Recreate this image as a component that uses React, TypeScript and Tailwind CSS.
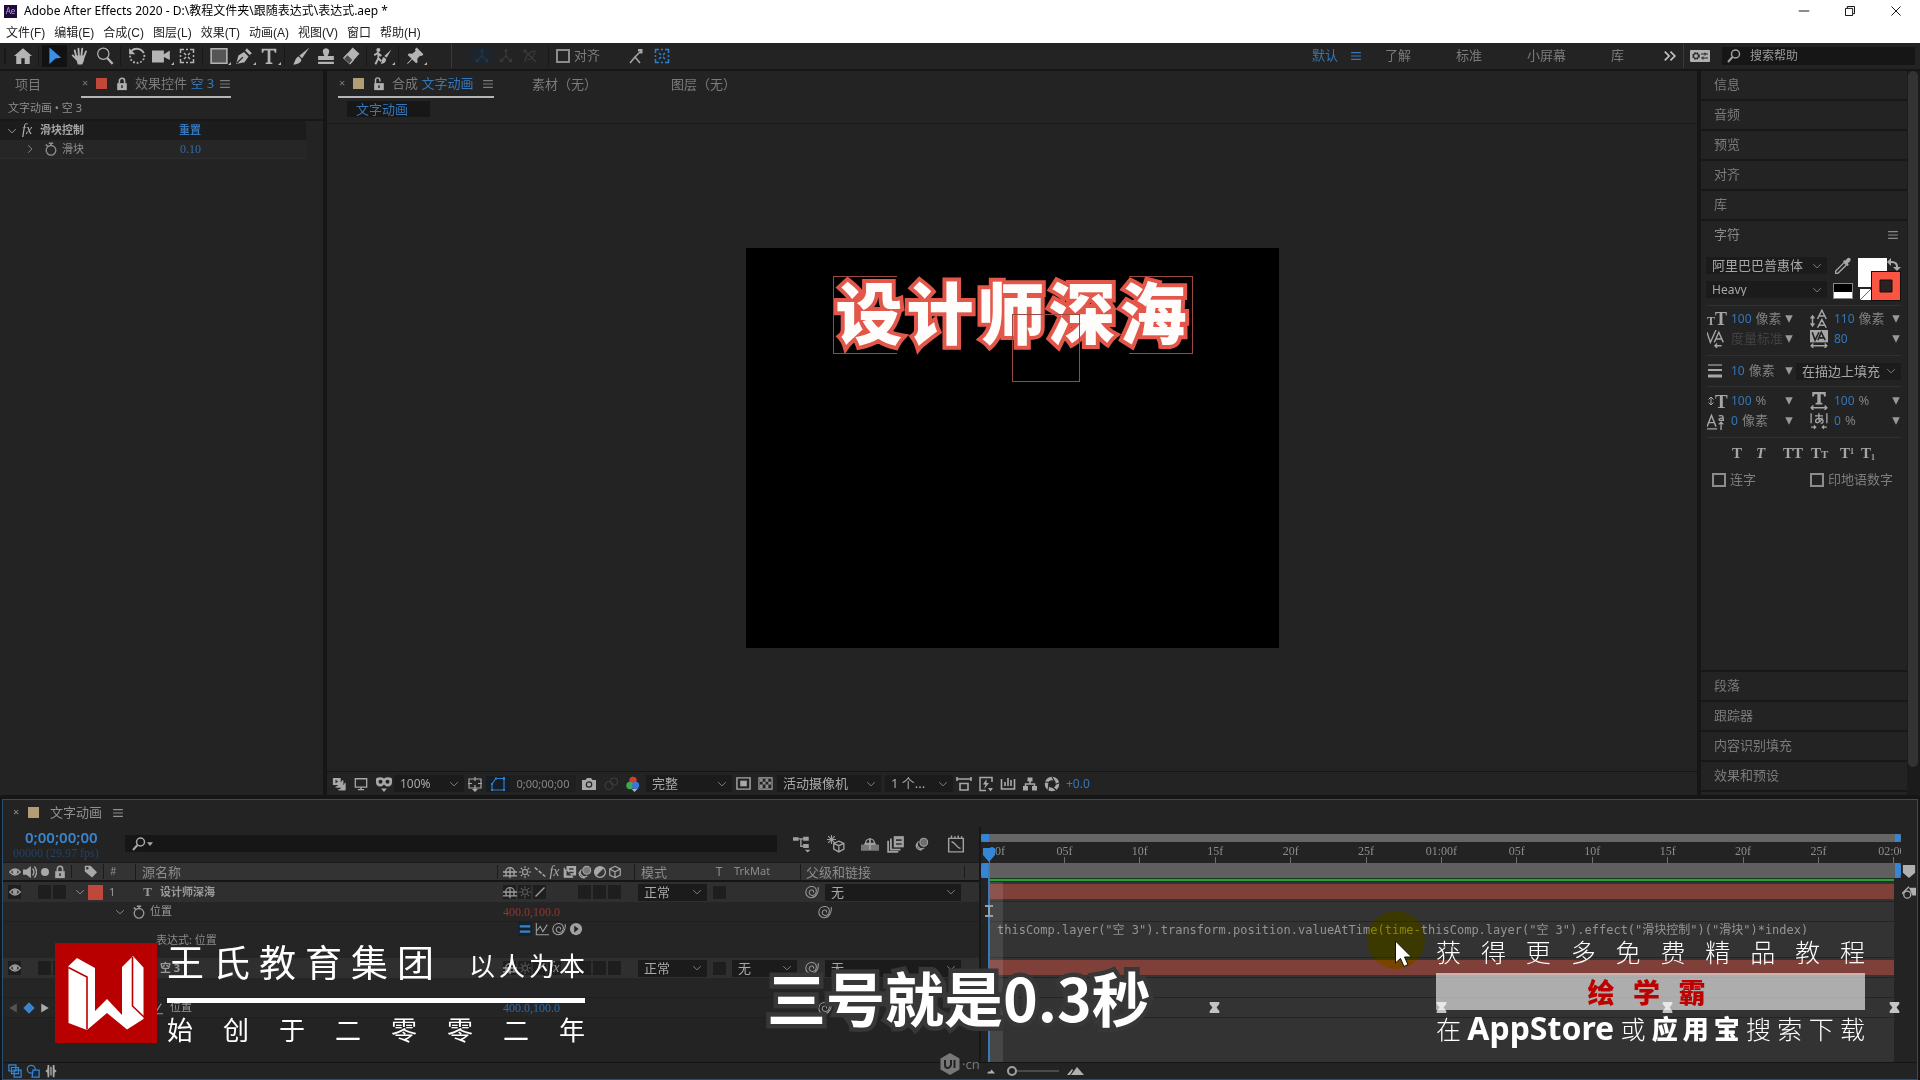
import React from "react";

const CJK = "font-['Noto_Sans','Noto_Sans_CJK_SC',sans-serif]";
const DIGITS = "font-['Liberation_Serif','Noto_Sans_CJK_SC',serif] text-[12px]";

type IcProps = { children: React.ReactNode; className?: string };
const Ic = ({ children, className = "size-4" }: IcProps) => (
  <svg viewBox="0 0 16 16" className={`shrink-0 ${className}`} fill="none" stroke="currentColor" strokeWidth="1.2" aria-hidden="true">
    {children}
  </svg>
);
const F = { fill: "currentColor", stroke: "none" };

const Chevron = () => <Ic className="size-3"><path d="M3 5.500l5 5 5-5" /></Ic>;
const MenuLines = () => <Ic className="size-3"><path d="M1.500 3.500h13M1.500 8h13M1.500 12.500h13" strokeWidth="1.600" /></Ic>;
const Eye = () => <Ic className="size-3"><path d="M1 8q7-8 14 0q-7 8-14 0z" strokeWidth="1.800" /><circle cx="8" cy="8" r="3.200" {...F} /></Ic>;
const Lock = () => <Ic className="size-3.5"><path d="M2.500 7h11v8h-11z" {...F} /><path d="M5 7V4.500a3 3 0 0 1 6 0V7" strokeWidth="1.800" /><path d="M8 9.500v3" stroke="#222" strokeWidth="1.600" /></Ic>;
const Unlock = () => <Ic className="size-3.5"><path d="M2.500 7h11v8h-11z" {...F} /><path d="M4 7V3.500a2.500 2.500 0 0 1 5 0V5" strokeWidth="1.700" /><path d="M8 9.500v3" stroke="#222" strokeWidth="1.600" /></Ic>;
const Search = () => <Ic className="size-4"><circle cx="9.500" cy="6" r="4" strokeWidth="1.500" /><path d="M6.500 9L2 14" strokeWidth="2" /></Ic>;
const Stopwatch = () => <Ic className="size-3.5"><circle cx="8" cy="9.500" r="5.500" strokeWidth="1.500" /><path d="M5.500 1.500h5M8 1.500V4M2 3l2.500 2" strokeWidth="1.700" /></Ic>;
const Spiral = () => <Ic className="size-3.5"><path d="M15 2.500c1 6-2.500 12-8 12C3.500 14.500.5 11.500 1 7.500 1.500 3.500 5 1.500 8.500 1.800c3.500.4 5 3.200 4.300 6.200-.7 3-3 4.200-5.300 3.800-2.200-.4-3-2.300-2.500-4 .5-1.600 2-2.400 3.400-2 1.200.3 1.700 1.500 1.200 2.700" strokeWidth="1.200" /></Ic>;
const Shy = () => <Ic className="size-3.5"><path d="M3 8a5 5 0 0 1 10 0zM0 8h16M0 12.500h16M8 4v11M3.500 8v4M12.500 8v4" strokeWidth="1.500" /></Ic>;
const Sun = () => <Ic className="size-3.5"><circle cx="8" cy="8" r="2.800" /><path d="M8 1v3M8 12v3M1 8h3M12 8h3M3.200 3.200l2 2M10.800 10.800l2 2M12.800 3.200l-2 2M5.200 10.800l-2 2" /></Ic>;
const Fx = () => <span className="font-['Liberation_Serif',serif] text-[14px] leading-none italic">fx</span>;
const Film = () => <Ic className="size-3.5"><path d="M1 3v11h11M4 1h11v11H4z" {...F} /><path d="M1.500 3v11h10" /><path d="M7 4.500h5M7 8.500h5" stroke="#333" strokeWidth="1.600" /></Ic>;
const Blur = () => <Ic className="size-3.5"><circle cx="10" cy="6" r="4.500" fill="currentColor" fillOpacity=".6" /><path d="M4 5a5 5 0 0 0 6.500 7.500M2 7.500A5 5 0 0 0 8 14.500" strokeWidth="1.400" /></Ic>;
const Half = () => <Ic className="size-3.5"><circle cx="8" cy="8" r="6.200" strokeWidth="1.500" /><path d="M12.500 3.500a6.300 6.300 0 0 0-9 9z" {...F} /></Ic>;
const Cube = () => <Ic className="size-3.5"><path d="M8 1.500l6 3v7l-6 3-6-3v-7zM2 4.500l6 3.200 6-3.200M8 7.700v6.800" strokeWidth="1.400" /></Ic>;
const GraphIcon = () => <Ic className="size-3.5"><path d="M1.500 1v13.500H16M2 10l4-5 3 6 5-8" /></Ic>;
const Axis = () => <Ic className="size-4"><path d="M8 8V2M8 8l-5 5M8 8l5 5M6.500 3.500L8 1.500l1.500 2M2.500 10.500v3h3M13.500 10.500v3h-3" /></Ic>;
const PanBox = () => <Ic className="size-4"><path d="M1.500 5V1.500H5M11 1.500h3.500V5M14.500 11v3.500H11M5 14.500H1.500V11M7 1.500h2M7 14.500h2M1.500 7v2M14.500 7v2M5 5l2 2M11 5L9 7M5 11l2-2M11 11L9 9" strokeWidth="1.500" /></Ic>;

function Tool({ label, children, active, more }: { label: string; children: React.ReactNode; active?: boolean; more?: boolean }) {
  return (
    <button aria-label={label} className={`relative flex h-[22px] w-[25px] items-center justify-center ${active ? "bg-[#121212] text-[#3b8fe6]" : "text-[#b4b4b4]"}`}>
      {children}
      {more && <svg viewBox="0 0 4 4" className="absolute right-0 bottom-0.5 size-[3px]"><path d="M4 0v4H0z" fill="currentColor" /></svg>}
    </button>
  );
}
const Sep = () => <span className="flex w-[7px] justify-center"><i className="h-5 w-px bg-[#181818]" /></span>;

function Sel({ label, value, className }: { label: string; value: string; className: string }) {
  return (
    <span className={`relative flex h-[17px] items-center bg-[#1b1b1b] text-[#a8a8a8] ${className}`}>
      <select aria-label={label} className="h-full w-full appearance-none truncate bg-transparent pr-4 pl-1.5 leading-none outline-none">
        <option>{value}</option>
      </select>
      <span className="pointer-events-none absolute right-1 text-[#8a8a8a]"><Chevron /></span>
    </span>
  );
}

function Check({ label }: { label: string }) {
  return (
    <label className="flex items-center gap-1 text-[13px] text-[#7d7d7d]">
      <input type="checkbox" className="size-3.5 appearance-none border-2 border-[#8c8c8c]" />
      {label}
    </label>
  );
}

function TopBar() {
  return (
    <header>
      <div className="flex h-[22px] items-center bg-white pl-1 text-[12px] text-black">
        <span className="flex size-[13px] items-center justify-center bg-[#1f0a3c] text-[8px] text-[#b9a0f0]">Ae</span>
        <h1 className="ml-[7px]">Adobe After Effects 2020 - D:\教程文件夹\跟随表达式\表达式.aep *</h1>
        <div className="mr-[18px] ml-auto flex gap-[34px]">
          <button aria-label="最小化"><Ic className="size-3"><path d="M1 8h14" /></Ic></button>
          <button aria-label="还原"><Ic className="size-3"><path d="M2 4.500h9.500V14H2zM4.500 4.500V2H14v9.500h-2.500" /></Ic></button>
          <button aria-label="关闭"><Ic className="size-3"><path d="M2 2l12 12M14 2L2 14" /></Ic></button>
        </div>
      </div>
      <nav className="flex h-[21px] items-center gap-[9px] bg-white pl-1.5 font-['Liberation_Sans','Noto_Sans_CJK_SC',sans-serif] text-[12px] text-[#222]">
        {["文件(F)", "编辑(E)", "合成(C)", "图层(L)", "效果(T)", "动画(A)", "视图(V)", "窗口", "帮助(H)"].map((m) => <button key={m}>{m}</button>)}
      </nav>
      <div className="flex h-7 items-center border-b-2 border-[#161616] bg-[#232323] text-[13px] text-[#7b7b7b]">
        <span className="ml-1 h-4 w-0.5 bg-[#191919]" />
        <span className="w-1" />
        <Tool label="主页"><Ic className="size-[18px]"><path d="M8 1l8 7h-2v7H9.500v-5h-3v5H2V8H0z" {...F} /></Ic></Tool>
        <Sep />
        <Tool label="选取" active><Ic className="size-[18px]"><path d="M3 0.500l10.500 9-5 .7L3 15z" {...F} /></Ic></Tool>
        <Tool label="手形"><Ic className="size-[18px]"><path d="M4.600 8.500L3.300 3M7 7.500L6.600 1.500M9.300 7.500l.7-6M11.500 8.500l1.800-4.500M5 11L1.500 7.500" strokeWidth="1.700" strokeLinecap="round" /><path d="M3.800 7.500h8.500l-.8 4.500-1.500 3.500H6z" {...F} /></Ic></Tool>
        <Tool label="缩放"><Ic className="size-[18px]"><circle cx="6.500" cy="6" r="5" strokeWidth="1.100" /><path d="M10 9.800l4.800 5.200" strokeWidth="2" /></Ic></Tool>
        <Sep />
        <Tool label="旋转"><Ic className="size-[18px]"><path d="M3 3.500C6 .5 12 1 14 5.500" strokeWidth="1.700" /><path d="M14.500 7c.5 5-4 8-8 7-3-.7-5-3.500-4.500-6.500" strokeWidth="1.600" strokeDasharray="1.600 1.600" /><path d="M1 1v5.500h5.500z" {...F} /></Ic></Tool>
        <Tool label="摄像机" more><Ic className="size-[19px]"><path d="M0 3h10v3l5-3v8l-5-2.500V13H0z" {...F} /></Ic></Tool>
        <Tool label="锚点"><PanBox /></Tool>
        <Sep />
        <Tool label="矩形" more><Ic className="size-[18px]"><path d="M1 1.500h14v13H1z" fill="#555" strokeWidth="1.400" /></Ic></Tool>
        <Tool label="钢笔" more><Ic className="size-[18px]"><path d="M1 15L3 7.500l5-3 4 4-3.500 5zM9 3l1.500-2L15 5.500 13 7z" {...F} /><path d="M1.500 14.500L7 9" stroke="#232323" /></Ic></Tool>
        <Tool label="文字" more><Ic className="size-[18px]"><path d="M1.500 1.500h13V5h-1.300L12.500 3H9.200v10.500l1.800.5v1H5v-1l1.800-.5V3H3.500L2.800 5H1.500z" {...F} /></Ic></Tool>
        <Sep />
        <Tool label="画笔"><Ic className="size-[18px]"><path d="M15.500.5L9 10 6.500 7.700zM6 8.500L8.300 11c0 3-3.500 4.500-7.300 4.500C3 13.500 2.500 9.500 6 8.500z" {...F} /></Ic></Tool>
        <Tool label="仿制图章"><Ic className="size-[18px]"><path d="M8 1a3 3 0 0 1 2.500 4.500L9.500 8H15v3.500H1V8h5.500l-1-2.500A3 3 0 0 1 8 1zM1 13h14v2H1z" {...F} /></Ic></Tool>
        <Tool label="橡皮擦"><Ic className="size-[18px]"><path d="M9.500.5L15.500 6 7 15.500 1 10z" {...F} /><path d="M1.500 10L5 6.500l5 5L7 15" fill="#4a4a4a" /></Ic></Tool>
        <Sep />
        <Tool label="Roto 笔刷" more><Ic className="size-[19px]"><circle cx="4.500" cy="2.500" r="1.700" {...F} /><path d="M1 7l3-2 3 2.500M4.500 5v4.500L2 14.500M4.500 9.500L7 12" strokeWidth="1.600" /><path d="M15.500 2L11.500 9 9.500 7.500zM9 8.500l2 1.500c0 3-2 4-4.500 4C8 12.500 7 10 9 8.500z" {...F} /></Ic></Tool>
        <Sep />
        <Tool label="人偶控点" more><Ic className="size-[18px]"><path d="M9.500 0.500L15.500 6.500 14 8l-1.500-.3L10 10.500l.3 3L9 14.500 5.500 11 1.500 15l-.5-.5 4-4L1.500 7l1-1.300 3 .3L8.500 3.500 8 2z" {...F} /></Ic></Tool>
        <span className="ml-6 h-6 w-px bg-[#3a3a3a]" />
        <div className="ml-[18px] flex text-[#3a3a3a]">
          <span className="flex w-6 justify-center bg-[#1e242b] text-[#1d3750]"><Axis /></span>
          <span className="flex w-6 justify-center"><Axis /></span>
          <span className="flex w-6 justify-center"><Ic><path d="M2 2l12 12M3 14c0-6 5-11 10-11-1 5-4 9-8 9M2 5V2h3" /></Ic></span>
        </div>
        <span className="mr-[7px] ml-1.5 h-5 w-px bg-[#191919]" />
        <Check label="对齐" />
        <div className="ml-7 flex items-center gap-2.5 text-[#a6a6a6]">
          <Ic><path d="M2 15l5-6 5 6M7 9l5-5" strokeWidth="1.500" /><path d="M10 1h4.500v4.500H12V3.500h-2z" {...F} /></Ic>
          <span className="text-[#2f7fc8]"><PanBox /></span>
        </div>
        <nav className="ml-auto flex items-center gap-[45px]">
          <span className="-mr-[22px] flex items-center gap-3 text-[#3577b8]"><button>默认</button><MenuLines /></span>
          <button>了解</button><button>标准</button><button>小屏幕</button><button>库</button>
          <button aria-label="更多" className="-ml-1.5 text-[#c0c0c0]"><Ic className="size-3.5"><path d="M2 3l5 5-5 5M8.500 3l5 5-5 5" strokeWidth="2" /></Ic></button>
        </nav>
        <span className="mx-1.5 h-6 w-px bg-[#3a3a3a]" />
        <svg viewBox="0 0 20 12" className="h-3 w-5"><rect width="20" height="12" rx="1" fill="#b0b0b0" /><circle cx="6" cy="6" r="3" fill="none" stroke="#232323" strokeWidth="1.600" strokeDasharray="1.600 .8" /><circle cx="6" cy="6" r="2.400" fill="none" stroke="#232323" /><path d="M11 4h7M11 8h7M15 2.500v3M13 6.500v3" stroke="#232323" /></svg>
        <label className="mr-[5px] ml-3 flex h-[18px] w-[193px] items-center gap-2 bg-[#161616] pl-1 text-[#a0a0a0]">
          <Search />
          <input type="search" aria-label="搜索帮助" placeholder="搜索帮助" className="w-full bg-transparent text-[12px] outline-none placeholder:text-[#9a9a9a]" />
        </label>
      </div>
    </header>
  );
}

function EffectPanel() {
  return (
    <aside className="w-[323px] shrink-0 bg-[#232323]">
      <div className="flex h-[27px] items-center pl-[15px] text-[13px] text-[#7b7b7b]">
        <button className="w-[66px] text-left">项目</button>
        <div className="flex h-full w-[150px] items-center border-b-2 border-[#b5b5b5]">
          <button aria-label="关闭面板" className="w-[15px] pl-px text-left text-[11px]">×</button>
          <span className="size-[11px] bg-[#c0483a]" />
          <span className="ml-2 text-[#b0b0b0]"><Lock /></span>
          <span className="ml-1.5 whitespace-nowrap">效果控件 <span className="text-[#3577b8]">空 3</span></span>
          <span className="ml-auto"><MenuLines /></span>
        </div>
      </div>
      <p className="flex h-[23px] items-center border-b-2 border-[#181818] pl-2 text-[11px] text-[#8f8f8f]">文字动画 • 空 3</p>
      <div className="mr-[17px] text-[11px]">
        <div className="flex h-[19px] items-center bg-[#1c1c1c] pl-1.5 text-[#a4a4a4]">
          <Chevron /><span className="ml-1 text-[#b4b4b4]"><Fx /></span>
          <b className="ml-2 w-[139px]">滑块控制</b>
          <button className="font-bold text-[#3577b8]">重置</button>
        </div>
        <div className="flex h-[19px] items-center border-b border-[#2d2d2d] bg-[#262626] pl-6 text-[#909090]">
          <span className="-rotate-90"><Chevron /></span>
          <span className="ml-2"><Stopwatch /></span>
          <span className="ml-1 w-[118px]">滑块</span>
          <span className={`${DIGITS} text-[#2d6ca8]`}>0.10</span>
        </div>
      </div>
    </aside>
  );
}

function Viewer() {
  return (
    <section className="flex min-w-0 flex-1 flex-col bg-[#232323]">
      <div className="flex h-[27px] items-center pl-[11px] text-[13px] text-[#7b7b7b]">
        <div className="flex h-full w-[156px] items-center border-b-2 border-[#b5b5b5]">
          <button aria-label="关闭面板" className="w-[15px] pl-px text-left text-[11px]">×</button>
          <span className="size-[11px] bg-[#b39d74]" />
          <span className="ml-2 text-[#b0b0b0]"><Unlock /></span>
          <span className="ml-1.5 whitespace-nowrap">合成 <span className="text-[#3577b8]">文字动画</span></span>
          <span className="ml-auto"><MenuLines /></span>
        </div>
        <button className="ml-[38px]">素材（无）</button>
        <button className="ml-[74px]">图层（无）</button>
      </div>
      <div className="flex h-[26px] items-center border-b border-[#191919] pb-1 pl-5">
        <button className="h-4 w-[83px] bg-[#171717] pl-[9px] text-left text-[13px] leading-4 text-[#3577b8]">文字动画</button>
      </div>
      <div className="flex flex-1 items-center justify-center">
        <div className="relative h-[400px] w-[533px] bg-black">
          <p className="absolute top-[22px] left-[90px] font-['Noto_Sans_CJK_SC',sans-serif] text-[67px] leading-[80px] font-black tracking-[4px] whitespace-nowrap text-[#fffdfb] [-webkit-text-stroke:8px_#e2574a] [paint-order:stroke_fill]">设计师深海</p>
          <i className="absolute top-7 left-[87px] h-[78px] w-16 border-y border-l border-[#99493f]" />
          <i className="absolute top-7 left-[383px] h-[78px] w-16 border-y border-r border-[#99493f]" />
          <i className="absolute top-[66px] left-[266px] h-[68px] w-[68px] border border-[#99493f]" />
        </div>
      </div>
      <div className="flex h-6 items-center border-t border-[#161616] pl-[5px] text-[13px] text-[#a8a8a8]">
        <div className="flex w-[62px] items-center gap-2">
          <Ic className="size-3.5"><path d="M1 1h9v8H1zM12 4h1v8H5v-1M15 7v8H8" {...F} /><path d="M12 4v7.500H4M15 6.500V14.500H7" /><path d="M4 3l3 2-3 2z" fill="#232323" stroke="none" /></Ic>
          <Ic className="size-3.5"><path d="M1.500 2h13v9.500h-13zM8 11.500v3M4.500 14.500h7" strokeWidth="1.500" /></Ic>
          <Ic className="size-4"><path d="M0 2.500q4-2.500 8 0 4-2.500 8 0v4c0 5-6 5-8 2-2 3-8 3-8-2zM5 12.500h6L8 16z" {...F} /><circle cx="4.500" cy="5.700" r="2" fill="#232323" stroke="none" /><circle cx="11.500" cy="5.700" r="2" fill="#232323" stroke="none" /></Ic>
        </div>
        <Sel label="放大率" value="100%" className="w-[70px] text-[12px]" />
        <span className="ml-[3px]"><Ic><path d="M2 3h12v9H2zM8 1v4M8 9v4M1 7.500h4M11 7.500h4" /><path d="M5 13h6L8 16z" {...F} /></Ic></span>
        <span className="ml-[3px] bg-[#151d26] px-1 text-[#2f7fc8]"><Ic><path d="M2 14V8l4-5.500h8V14z" /><path d="M1 13h2v2H1zM13 13h2v2h-2zM13 1h2v3h-2zM5 1.500h2v2H5zM1 7h2v2H1z" {...F} /></Ic></span>
        <button className="h-[17px] w-[66px] bg-[#1f1f1f] text-[11px] leading-[17px] text-[#858585]">0;00;00;00</button>
        <span className="ml-[5px]"><Ic><path d="M1 4h3.500L6 2h4l1.500 2H15v10H1z" {...F} /><circle cx="8" cy="8.500" r="2.700" stroke="#232323" /></Ic></span>
        <span className="ml-1.5 text-[#3c3c3c]"><Ic><circle cx="6" cy="9.500" r="4" /><circle cx="11" cy="5.500" r="3.500" /></Ic></span>
        <svg viewBox="0 0 16 16" className="mr-[5px] ml-1.5 size-4"><circle cx="8" cy="4.500" r="3.700" fill="#d43c2e" /><circle cx="5" cy="9.500" r="3.700" fill="#3faa4a" /><circle cx="10.500" cy="9.500" r="3.700" fill="#3a78d8" /><path d="M6.500 13h6l-3 3z" fill="#b0b0b0" /></svg>
        <Sel label="分辨率" value="完整" className="w-[86px]" />
        <span className="ml-1"><Ic className="size-[15px]"><path d="M1 2h14v12H1z" strokeWidth="1.500" /><path d="M4.500 5h7v6h-7z" {...F} /></Ic></span>
        <span className="ml-[7px] mr-1"><Ic className="size-[15px]"><path d="M1 2h14v12H1z" /><path d="M2 3h3v3H2zM8 3h3v3H8zM5 6h3v3H5zM11 6h3v3h-3zM2 9h3v4H2zM8 9h3v4H8z" {...F} opacity=".8" /></Ic></span>
        <Sel label="3D 视图" value="活动摄像机" className="w-[104px]" />
        <Sel label="视图布局" value="1 个..." className="ml-1 w-[68px]" />
        <div className="ml-[3px] flex items-center gap-1.5">
          <Ic><path d="M1 3h14M1 1v4M15 1v4M4 7.500h8v6.500H4z" strokeWidth="1.600" /></Ic>
          <Ic><path d="M12 1.500H2v13h6M14 6V1.500h-2" strokeWidth="1.500" /><path d="M8.500 3L5 8.500h2.500L6 13l5-6H8.500zM10 12h5l-2.500 3.500z" {...F} /></Ic>
          <Ic><path d="M1.500 3v10h13V3M5 10V6M8 10V2M11 10V4" strokeWidth="1.600" /></Ic>
          <Ic><path d="M5.500 1.500h5v4h-5zM1 10h5v4.500H1zM10 10h5v4.500h-5z" {...F} /><path d="M8 5v3M3.500 10V8h9v2" strokeWidth="1.500" /></Ic>
          <Ic><circle cx="8" cy="8" r="5.500" strokeWidth="3.500" /><path d="M8 1l3 5M15 7l-5.500 2M12 14l-4.500-4M4 14l1-6M1 6l5.500.5" stroke="#232323" /></Ic>
          <span className="text-[12px] text-[#3577b8]">+0.0</span>
        </div>
      </div>
    </section>
  );
}

const Acc = ({ children }: { children: string }) => (
  <button className="flex h-[30px] w-full items-center border-b-2 border-[#181818] pl-[13px] text-left text-[13px] text-[#7b7b7b]">{children}</button>
);

const serif = "font-['Liberation_Serif',serif] font-bold leading-none";

function Num({ icon, value, unit, dim }: { icon: React.ReactNode; value?: string; unit?: string; dim?: string }) {
  return (
    <div className="flex h-5 items-center text-[13px] whitespace-nowrap text-[#808080]">
      <span className="flex w-6 shrink-0 text-[#a6a6a6]">{icon}</span>
      {value && <span className="text-[12px] text-[#3577b8]">{value}</span>}
      {unit && <span className="ml-1">{unit}</span>}
      {dim && <span className="text-[#424242]">{dim}</span>}
      <button aria-label="更多数值" className="ml-auto text-[#999]"><Ic className="size-2.5"><path d="M2 2h12L8 14z" {...F} /></Ic></button>
    </div>
  );
}

function SidePanels() {
  return (
    <aside className="flex w-[219px] shrink-0 bg-[#1b1b1b]">
      <div className="flex w-[206px] flex-col bg-[#232323]">
        {["信息", "音频", "预览", "对齐", "库"].map((t) => <Acc key={t}>{t}</Acc>)}
        <div className="flex-1 border-b-2 border-[#181818]">
          <div className="mb-2 flex h-7 items-center justify-between pr-2 pl-[13px] text-[13px] text-[#8a8a8a]">字符 <MenuLines /></div>
          <div className="flex pl-[5px]">
            <div className="flex w-[121px] flex-col gap-[7px] text-[13px]">
              <Sel label="字体" value="阿里巴巴普惠体" className="w-full" />
              <Sel label="字体样式" value="Heavy" className="w-full text-[12px]" />
            </div>
            <div className="ml-1.5 flex w-5 flex-col items-center gap-2 text-[#a8a8a8]">
              <Ic className="size-[18px]"><path d="M1.500 14.500v-2L9 5l2 2-7.500 7.500z" /><path d="M8 4l4 4 1.200-1.200-1-1 2.300-2.300a1.800 1.800 0 0 0-2.500-2.500L9.700 3.300l-.7-.6z" {...F} /></Ic>
              <span className="h-4 w-5 border border-[#888] bg-white"><i className="block h-2 bg-black" /></span>
            </div>
            <svg viewBox="0 0 44 44" className="ml-[4px] h-11 w-11">
              <path d="M1 1h29v29H1z" fill="#fff" />
              <path d="M3 32h11v11H3z" fill="#fff" /><path d="M3 43L14 32" stroke="#d33" />
              <path d="M14 14h30v30H14z" fill="#111" /><path d="M15 15h28v28H15z" fill="#fa5442" /><path d="M23 23h12v12H23z" fill="#2c2020" stroke="#111" />
              <path d="M33 5q8-1 7 7" fill="none" stroke="#aaa" strokeWidth="2" /><path d="M30 5l4-4v8zM36 10h8l-4 4z" fill="#aaa" />
            </svg>
          </div>
          <div className="mx-1.5 mt-1 grid grid-cols-[87px_1fr] gap-x-4 border-y border-[#303030] pt-[3px] pb-1.5">
            <Num icon={<span className={serif}><span className="text-[12px]">T</span><span className="text-[18px]">T</span></span>} value="100" unit="像素" />
            <Num icon={<Ic className="size-5"><path d="M2 6v7M.5 7.500L2 5.500l1.500 2M.5 11.500l1.500 2 1.500-2M6 8l3.500-7L13 8M7.500 5.500h4M6 15l3.500-6.500L13 15M7.500 13h4" /></Ic>} value="110" unit="像素" />
            <Num icon={<Ic className="size-[18px]"><path d="M0 2l3 9 5-11M6.500 11l4-9 4 9M8 8h5M7 14h6M9 12l-2 2 2 2" /></Ic>} dim="度量标准" />
            <Num icon={<Ic className="size-[18px]"><path d="M0 0h16v11H0z" {...F} /><path d="M2 2l2.500 7L8 2l0 0M7 9l3-7 3.500 7M8.500 7h4" stroke="#222" strokeWidth="1.400" /><path d="M1 14h14M3 12l-2 2 2 2M13 12l2 2-2 2" /></Ic>} value="80" />
          </div>
          <div className="mx-1.5 flex items-center gap-0.5 border-b border-[#303030] py-[5px]">
            <div className="w-[87px]"><Num icon={<Ic className="size-4"><path d="M1 2h14" /><path d="M1 7h14" strokeWidth="2" /><path d="M1 13h14" strokeWidth="3" /></Ic>} value="10" unit="像素" /></div>
            <Sel label="描边方式" value="在描边上填充" className="w-[105px] text-[13px]" />
          </div>
          <div className="mx-1.5 grid grid-cols-[87px_1fr] gap-x-4 border-b border-[#303030] pt-1 pb-1.5">
            <Num icon={<span className={`flex items-center ${serif}`}><Ic className="h-4 w-2"><path d="M8 1v14M3 5l5-5 5 5M3 11l5 5 5-5" strokeWidth="2" /></Ic><span className="text-[19px]">T</span></span>} value="100" unit="%" />
            <Num icon={<Ic className="size-[18px]"><path d="M2 0h12v4h-1.500L12 2H9.500v7.500H11v1.500H5V9.500h1.500V2H4L3.500 4H2z" {...F} /><path d="M1 14h14M3 12l-2 2 2 2M13 12l2 2-2 2" /></Ic>} value="100" unit="%" />
            <Num icon={<Ic className="size-[18px]"><path d="M0 13L4 3l4 10M1.500 9.500h5M0 15h9M12.500 16V9M10.500 11l2-2 2 2M10.500 3.500c4-1 4 0 4 4h-3c-2-1 0-2.500 3-2" /></Ic>} value="0" unit="像素" />
            <Num icon={<Ic className="size-[18px]"><path d="M1 1v9M15 1v9M4.500 3.500h7M8 1c-.5 4 0 6 .5 8M11 5c-1 4-6 6-6 3s6-3 6.500-.500-1 2.500-2 2.500M1 13.500h4M3.500 12L5 13.500 3.500 15M15 13.500h-4M12.500 12L11 13.500l1.500 1.500" /></Ic>} value="0" unit="%" />
          </div>
          <div className={`flex h-[30px] items-center pl-[31px] text-[15px] text-[#a6a6a6] ${serif}`}>
            <button className="w-6 text-left font-black">T</button>
            <button className="w-[27px] text-left italic">T</button>
            <button className="w-6 text-left">TT</button>
            <button className="w-[29px] pl-1 text-left">T<span className="text-[11px]">T</span></button>
            <button className="w-[25px] pl-1 text-left">T<sup className="text-[8px]">1</sup></button>
            <button className="text-left">T<sub className="text-[8px]">1</sub></button>
          </div>
          <div className="flex h-6 items-center pl-[11px]">
            <div className="w-[98px]"><Check label="连字" /></div>
            <Check label="印地语数字" />
          </div>
        </div>
        {["段落", "跟踪器", "内容识别填充", "效果和预设"].map((t) => <Acc key={t}>{t}</Acc>)}
        <div className="h-[3px]" />
      </div>
      <div className="ml-px mb-7 w-2.5 rounded-full bg-[#333]" />
    </aside>
  );
}

const Box = ({ on = true, children }: { on?: boolean; children?: React.ReactNode }) => (
  <span className="flex h-3.5 w-[15px] items-center justify-center px-px"><span className={`flex size-full items-center justify-center ${on ? "bg-[#1e1e1e]" : ""}`}>{children}</span></span>
);

function LayerRow({ index, type, name, color, fx, trk }: { index: string; type: React.ReactNode; name: string; color: string; fx?: boolean; trk?: boolean }) {
  return (
    <div className="flex h-5 items-center bg-[#2f2f2f] text-[13px] text-[#9a9a9a]">
      <div className="flex w-[68px] pl-1"><Box><Eye /></Box><Box on={false} /><Box /><Box /></div>
      <div className="flex w-8 items-center pl-[3px]"><Chevron /><span className={`ml-auto size-[15px] ${color}`} /></div>
      <span className="w-8 pl-1.5 text-[11px]">{index}</span>
      <span className="flex w-[25px] justify-center">{type}</span>
      <b className="w-[337px] text-[11px]">{name}</b>
      <div className="flex w-[137px] pl-[5px]">
        <Box><Shy /></Box><Box><span className="opacity-50"><Sun /></span></Box>
        <Box><Ic className="size-3"><path d="M2 14L14 2" strokeWidth="2" /></Ic></Box>
        <Box on={!!fx}>{fx && <Fx />}</Box><Box on={false} /><Box /><Box /><Box />
      </div>
      <Sel label={`${name} 模式`} value="正常" className="ml-1 w-[69px]" />
      <span className="ml-1.5 size-[13px] bg-[#1e1e1e]" />
      <span className="ml-1.5 flex w-[65px]">{trk && <Sel label={`${name} 轨道遮罩`} value="无" className="w-full" />}</span>
      <span className="mr-1.5 ml-2"><Spiral /></span>
      <Sel label={`${name} 父级`} value="无" className="w-[136px]" />
    </div>
  );
}

function LayerColumns() {
  return (
    <div className="w-[978px] shrink-0 border-r-2 border-[#181818]">
      <div className="flex h-9 items-start border-b border-[#191919]">
        <div className="w-[122px] pl-[10px] text-center">
          <button className="block w-[76px] pl-3 font-['Noto_Sans',sans-serif] text-[15px] leading-5 font-semibold text-[#3a84cc]">0;00;00;00</button>
          <p className={`${DIGITS} -mt-0.5 text-left leading-4 whitespace-nowrap text-[#1f4568]`}>00000 (29.97 fps)</p>
        </div>
        <label className="mt-2 flex h-[17px] w-[652px] items-center bg-[#161616] pl-1.5 text-[#a8a8a8]">
          <Search /><Ic className="size-1.5"><path d="M0 3h16L8 13z" {...F} /></Ic>
          <input type="search" aria-label="搜索图层" className="w-full bg-transparent text-[12px] outline-none" />
        </label>
        <div className="mt-2 ml-4 flex items-center text-[#a0a0a0]">
          <Ic className="size-[18px]"><path d="M0 2h5v3H0zM9 1.500h5v3.500H9zM9 8h5v3.500H9zM10.500 13h5L13 15.500z" {...F} /><path d="M5 3.500h4M7 3.500v6.500h2" /></Ic>
          <span className="ml-4"><Ic className="size-[18px]"><path d="M4 0v8M0 4h8M1 1l6 6M7 1L1 7" strokeWidth="1" /><path d="M10.500 5.500l4.500 2v5l-4.500 2.500L6 12.500v-5zM6 7.500l4.500 2 4.500-2M10.500 9.500V15" /></Ic></span>
          <span className="ml-4"><Ic className="size-[18px]"><path d="M4 7.500a4 4 0 0 1 8 0z" /><path d="M0 8.500h16V14H0z" fill="#777" stroke="none" /><path d="M8 3v10M3 8h10" strokeWidth="1.600" /></Ic></span>
          <span className="ml-2"><Ic className="size-[18px]"><path d="M6 1h9v10H6z" {...F} /><path d="M3.500 3v10H12M1 5v10h9" strokeWidth="1.600" /><path d="M8 4.500h5M8 8h5" stroke="#333" strokeWidth="1.500" /></Ic></span>
          <span className="ml-2 flex size-[18px] items-center justify-center"><Blur /></span>
          <span className="ml-4"><Ic className="size-[18px]"><path d="M1.500 3h13v12h-13zM4 3V.5M7 3V1M10 3V.5M13 3V1M4 6c3 0 4 5 8 6" strokeWidth="1.300" /></Ic></span>
        </div>
      </div>
      <div className="flex h-[19px] items-center border-b-2 border-[#151515] bg-[#333] text-[13px] text-[#8c8c8c]">
        <div className="flex w-[68px] items-center pl-1 text-[#a8a8a8]">
          <span className="flex w-[15px] justify-center"><Eye /></span>
          <span className="flex w-[15px] justify-center"><Ic className="size-3.5"><path d="M0 5h4l5-4v14l-5-4H0z" {...F} /><path d="M11 4q3 4 0 8M13 1.500q5 6.500 0 13" strokeWidth="1.500" /></Ic></span>
          <span className="flex w-[15px] justify-center"><i className="size-2 rounded-full bg-current" /></span>
          <span className="flex w-[15px] justify-center"><Lock /></span>
        </div>
        <span className="flex w-8 justify-center border-l border-[#1b1b1b] pl-1.5 text-[#a8a8a8]"><Ic className="size-[13px]"><path d="M1 1h7l8 8-6 6.500L1 8z" {...F} /><circle cx="4" cy="4" r="1.500" fill="#333" stroke="none" /></Ic></span>
        <span className="w-8 border-l border-[#1b1b1b] pl-1.5 text-[10px]">#</span>
        <span className="w-[362px] border-l border-[#1b1b1b] pl-1.5 leading-4">源名称</span>
        <div className="flex w-[137px] items-center border-l border-[#1b1b1b] pl-1 text-[#a8a8a8] [&>span]:flex [&>span]:w-[15px] [&>span]:justify-center">
          <span><Shy /></span><span><Sun /></span><span><Ic className="size-3"><path d="M1 2l14 12" strokeWidth="2" strokeDasharray="5 2" /></Ic></span><span><Fx /></span><span><Film /></span><span><Blur /></span><span><Half /></span><span><Cube /></span>
        </div>
        <span className="w-[74px] border-l border-[#1b1b1b] pl-1.5 leading-4">模式</span>
        <span className="w-[22px] text-center text-[12px]">T</span>
        <span className="w-[70px] pl-1 text-[11px]">TrkMat</span>
        <span className="w-[164px] border-l border-[#1b1b1b] pl-[5px] leading-4">父级和链接</span>
        <span className="h-3 border-l border-[#1b1b1b]" />
      </div>
      <LayerRow index="1" type={<b className="font-['Liberation_Serif',serif]">T</b>} name="设计师深海" color="bg-[#c0483a]" />
      <div className="flex h-5 items-center border-b border-[#1f1f1f] bg-[#252525] pl-[111px] text-[11px] text-[#999]">
        <Chevron /><span className="mr-1 ml-1.5"><Stopwatch /></span>
        <span className="w-[353px]">位置</span>
        <span className={`${DIGITS} w-[315px] text-[#97342c]`}>400.0,100.0</span>
        <Spiral />
      </div>
      <div className="flex h-9 items-start bg-[#252525] pl-[153px] text-[11px] text-[#8c8c8c]">
        <span className="w-[362px] leading-9">表达式: 位置</span>
        <div className="flex items-center gap-[3px] text-[#a0a0a0]">
          <span className="bg-[#14212e] text-[#3a84cc]"><Ic className="size-3.5"><path d="M2 5h12M2 11h12" strokeWidth="2.500" /></Ic></span>
          <GraphIcon /><Spiral />
          <Ic className="size-3.5"><circle cx="8" cy="8" r="7" {...F} /><path d="M6 4l5 4-5 4z" fill="#222" stroke="none" /></Ic>
        </div>
      </div>
      <LayerRow index="2" type={null} name="空 3" color="bg-[#c0483a]" fx trk />
      <div className="h-5 border-b border-[#1f1f1f] bg-[#252525]" />
      <div className="flex h-5 items-center border-b border-[#1f1f1f] bg-[#252525] pl-1 text-[11px] text-[#999]">
        <button aria-label="上一个关键帧" className="text-[#555]"><Ic className="size-3"><path d="M13 2v12L3 8z" {...F} /></Ic></button>
        <button aria-label="关键帧" className="ml-[3px] text-[#3a84cc]"><Ic className="size-3.5"><path d="M8 1.500L14.500 8 8 14.500 1.500 8z" {...F} /></Ic></button>
        <button aria-label="下一个关键帧" className="ml-[3px] text-[#aaa]"><Ic className="size-3"><path d="M3 2v12l10-6z" {...F} /></Ic></button>
        <span className="ml-[98px]"><GraphIcon /></span>
        <span className="ml-[7px] w-[333px]">位置</span>
        <span className={`${DIGITS} w-[315px] text-[#2d6ca8]`}>400.0,100.0</span>
        <Spiral />
      </div>
      <div className="h-11 bg-[#232323]" />
    </div>
  );
}

const TICKS = ["00f", "05f", "10f", "15f", "20f", "25f", "01:00f", "05f", "10f", "15f", "20f", "25f", "02:00f"];
const row = "h-5 border-b border-[#242424] bg-[#333]";

function Tracks() {
  return (
    <div className="flex min-w-0 flex-1">
      <div className="relative min-w-0 flex-1 pt-[7px]">
        <div className="flex h-2 bg-[#666]"><i className="w-2 rounded-l-full bg-[#3585d8]" /><i className="ml-auto w-1.5 rounded-r-full bg-[#3585d8]" /></div>
        <div className="overflow-hidden">
          <div className={`mr-[7px] ml-2 flex h-[21px] justify-between ${DIGITS} text-[#8d8d8d]`}>
            {TICKS.map((t, i) => (
              <span key={i} className={`flex w-0 flex-col justify-between pt-1 ${i ? "items-center" : "items-start"}`}>
                <span className="leading-[10px]">{t}</span><i className="h-1.5 w-px bg-[#707070]" />
              </span>
            ))}
          </div>
        </div>
        <div className="flex h-[15px] bg-[#5f5f5f]"><i className="w-2 rounded-l bg-[#3585d8]" /><i className="ml-auto w-1.5 rounded-r bg-[#3585d8]" /></div>
        <div className="mr-[7px] ml-2 h-1 border-y border-[#123d18] bg-[#2c9c3c]" />
        <div className="mr-[7px] ml-[7px] bg-[#333]">
          <div className="flex h-5 border-b border-[#242424] bg-[#333] pt-0.5 pb-0.5"><i className="w-full bg-[#80403a]" /></div>
          <div className={row} />
          <div className="h-9 border-b border-[#242424] pl-[9px]">
            <code className="block font-['DejaVu_Sans_Mono','Noto_Sans_CJK_SC',monospace] text-[12px] leading-4 whitespace-nowrap text-[#949494]">thisComp.layer("空 3").transform.position.valueAtTime(time-thisComp.layer("空 3").effect("滑块控制")("滑块")*index)</code>
          </div>
          <div className="flex h-5 border-b border-[#242424] bg-[#333] pt-0.5 pb-0.5"><i className="w-full bg-[#80403a]" /></div>
          <div className={row} />
          <div className={`${row} flex items-center justify-between text-[#c4c4c4]`}>
            {[0, 1, 2, 3, 4].map((k) => <span key={k} className="flex w-0 justify-center"><Ic className="size-[11px]"><path d="M1 0h14v3l-4 5 4 5v3H1v-3l4-5-4-5z" {...F} /></Ic></span>)}
          </div>
          <div className="h-11" />
        </div>
        <i className="absolute top-[55px] bottom-0 left-[7px] w-[15px] bg-white/10" />
        <i className="absolute top-9 bottom-0 left-[7px] w-0.5 bg-[#3a78b8]" />
        <svg viewBox="0 0 12 14" className="absolute top-[21px] left-0.5 h-3.5 w-3"><path d="M0 0h12v7l-6 7-6-7z" fill="#3585d8" /></svg>
        <svg viewBox="0 0 8 12" className="absolute top-[78px] left-1 h-3 w-2"><path d="M0 1h8M0 11h8M4 1v10" stroke="#8da0b4" strokeWidth="2" /></svg>
      </div>
      <div className="flex w-4 flex-col items-center pt-9 text-[#b0b0b0]">
        <Ic className="h-4 w-3.5"><path d="M1 1h14v9l-7 6-7-6z" {...F} /></Ic>
        <span className="mt-1.5"><Ic className="size-3.5"><path d="M8 3h8v9h-4z" {...F} /><circle cx="6" cy="11" r="4" strokeWidth="1.500" /><path d="M0 10l8-8" strokeWidth="1.500" /></Ic></span>
      </div>
    </div>
  );
}

function Timeline() {
  return (
    <section className="mx-0.5 border border-[#2b4f73] bg-[#232323]">
      <div className="flex h-[27px] items-center pb-0.5 pl-2.5 text-[13px] text-[#909090]">
        <button aria-label="关闭面板" className="w-[15px] text-left text-[11px]">×</button>
        <span className="mr-[11px] size-[11px] bg-[#b39d74]" />文字动画
        <span className="ml-2.5"><MenuLines /></span>
      </div>
      <div className="flex"><LayerColumns /><Tracks /></div>
      <div className="flex h-[17px] items-center border-t border-[#151515] pl-[5px] text-[#3a84cc]">
        <Ic className="size-3.5"><path d="M1 1h8v7H1zM4 4h8v7H4zM7 7h8v8H7z" fill="#15293d" strokeWidth="1.400" /></Ic>
        <span className="ml-1"><Ic className="size-3.5"><circle cx="6" cy="6" r="4.500" strokeWidth="1.500" /><path d="M8 7h7v8H7z" fill="#15293d" strokeWidth="1.500" /></Ic></span>
        <span className="ml-1 text-[#aaa]"><Ic className="size-3.5"><path d="M6 1H4v5L1.500 8 4 10v5h2zM10 1h2v5l2.500 2-2.500 2v5h-2z" {...F} /><path d="M8 3v10M5 4v8M11 4v8" strokeWidth="1.600" /></Ic></span>
        <div className="ml-[927px] flex items-center text-[#b0b0b0]">
          <Ic className="h-2 w-3"><path d="M0 13l4-5 2 2 3-5 7 8z" {...F} /></Ic>
          <input type="range" aria-label="时间缩放" defaultValue={0} className="mr-2 ml-2.5 h-2.5 w-[52px] appearance-none bg-transparent [&::-webkit-slider-runnable-track]:h-0.5 [&::-webkit-slider-runnable-track]:bg-[#4a4a4a] [&::-webkit-slider-thumb]:-mt-1 [&::-webkit-slider-thumb]:size-2.5 [&::-webkit-slider-thumb]:appearance-none [&::-webkit-slider-thumb]:rounded-full [&::-webkit-slider-thumb]:border-2 [&::-webkit-slider-thumb]:border-[#a0a0a0] [&::-webkit-slider-thumb]:bg-[#232323]" />
          <svg viewBox="0 0 17 8" className="h-2 w-[17px]"><path d="M0 8l5-6 1 1-3 5zM4 8l6-8 7 8z" fill="currentColor" /></svg>
        </div>
      </div>
    </section>
  );
}

const spread = "[text-align-last:justify]";

function Overlays() {
  return (
    <>
      <div className="absolute bottom-[111px] left-[1367px] size-[58px] rounded-full bg-[#ffff00] mix-blend-multiply" />
      <div className="absolute bottom-[111px] left-[1367px] size-[58px] rounded-full bg-[#605000]/20" />
      <svg viewBox="0 0 18 27" className="absolute bottom-[113px] left-[1395px] h-[27px] w-[18px]"><path d="M.5 1v22l5-4.500 3.500 8 4-2-3.500-7.500h7z" fill="#fff" stroke="#111" /></svg>

      <div className="absolute bottom-[33px] left-[55px] flex items-center gap-2.5 font-['Noto_Sans_CJK_SC',sans-serif] text-white">
        <svg viewBox="0 0 102 100" className="h-[100px] w-[102px]">
          <path d="M0 0h102v100H0z" fill="#b90000" />
          <path d="M13.500 23L22 15l18 10v43l12-12 15 16V24L78 13l10.500 11.500V76L72 86.500 52 70 32 87 13.500 80z" fill="#fff" />
          <path d="M13.500 24.500L32 34v52.500M77.500 14v49L89 74" fill="none" stroke="#b90000" strokeWidth="1.600" />
        </svg>
        <div className="w-[418px]">
          <div className="flex items-end justify-between">
            <p className={`w-[267px] text-[37px] leading-[44px] ${spread}`}>王氏教育集团</p>
            <p className={`w-[116px] pb-px text-[26px] leading-[34px] ${spread}`}>以人为本</p>
          </div>
          <hr className="mt-[15px] h-[5px] border-0 bg-white" />
          <p className={`mt-2 text-[26px] leading-[36px] ${spread}`}>始创于二零零二年</p>
        </div>
      </div>

      <p className="absolute bottom-12 left-[767px] font-['Noto_Sans_CJK_SC',sans-serif] text-[59px] leading-[70px] font-bold whitespace-nowrap text-white [-webkit-text-stroke:9px_#373737] [paint-order:stroke_fill]">三号就是0.3秒</p>

      <div className="absolute bottom-[5px] left-[940px] flex items-center gap-0.5 text-[#777]">
        <svg viewBox="0 0 20 22" className="h-[22px] w-5"><path d="M10 0l9.500 5.500v11L10 22 .5 16.500v-11z" fill="#777" /><path d="M5 7v5q0 3 2.500 3T11 12V7M14.500 7v8" fill="none" stroke="#232323" strokeWidth="2" /></svg>
        <span className="text-[13px] leading-none">·cn</span>
      </div>

      <div className="absolute bottom-[34px] left-[1436px] w-[429px] font-['Noto_Sans_CJK_SC',sans-serif] text-[25px] leading-[36px] font-light text-white">
        <p className={spread}>获得更多免费精品教程</p>
        <div className="mt-1 flex h-[37px] items-center justify-center bg-white/60"><p className={`-ml-2 w-[118px] text-[27px] leading-none font-black text-[#bd0000] ${spread}`}>绘学霸</p></div>
        <p className="flex items-center justify-between whitespace-nowrap">
          在<b className="font-['Noto_Sans',sans-serif] text-[32px] leading-[36px] font-bold">AppStore</b>或<b className={`w-[88px] text-[26px] font-black ${spread}`}>应用宝</b><span className={`w-[119px] ${spread}`}>搜索下载</span>
        </p>
      </div>
    </>
  );
}

export default function App() {
  return (
    <div className={`relative flex min-h-screen w-full flex-col overflow-hidden bg-[#161616] ${CJK}`}>
      <TopBar />
      <main className="flex flex-1 gap-1"><EffectPanel /><Viewer /><SidePanels /></main>
      <div className="h-1" />
      <Timeline />
      <Overlays />
    </div>
  );
}
